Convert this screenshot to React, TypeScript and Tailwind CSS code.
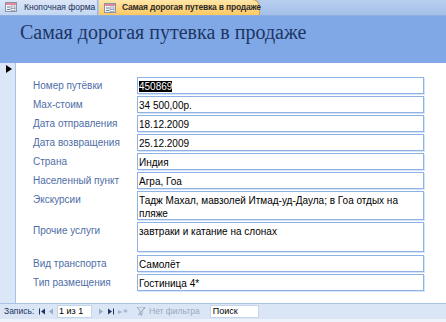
import React from "react";

const rows: { label: string; value: React.ReactNode; h: number; mt: number; selected?: boolean }[] = [
  { label: "Номер путёвки", value: "450869", h: 17, mt: 0, selected: true },
  { label: "Max-стоим", value: "34 500,00р.", h: 17, mt: 2 },
  { label: "Дата отправления", value: "18.12.2009", h: 17, mt: 2 },
  { label: "Дата возвращения", value: "25.12.2009", h: 17, mt: 2 },
  { label: "Страна", value: "Индия", h: 17, mt: 2 },
  { label: "Населенный пункт", value: "Агра, Гоа", h: 17, mt: 2 },
  {
    label: "Экскурсии",
    value: (
      <>
        Тадж Махал, мавзолей Итмад-уд-Даула; в Гоа отдых на
        <br />
        пляже
      </>
    ),
    h: 29,
    mt: 2,
  },
  { label: "Прочие услуги", value: "завтраки и катание на слонах", h: 30, mt: 2 },
  { label: "Вид транспорта", value: "Самолёт", h: 17, mt: 3 },
  { label: "Тип размещения", value: "Гостиница 4*", h: 17, mt: 2 },
];

function FormIcon() {
  return (
    <svg width="12" height="10" viewBox="0 0 12 10" className="shrink-0">
      <rect x="0.5" y="0.5" width="11" height="9" fill="#f4f6fb" stroke="#8a94a8" />
      <rect x="1" y="1" width="10" height="2" fill="#e4899a" />
      <rect x="2" y="4.5" width="3" height="1" fill="#6d7c9c" />
      <rect x="6" y="4" width="4" height="2" fill="#ffffff" stroke="#6d7c9c" strokeWidth="0.6" />
      <rect x="2" y="7" width="3" height="1" fill="#6d7c9c" />
      <rect x="6" y="6.5" width="4" height="2" fill="#ffffff" stroke="#6d7c9c" strokeWidth="0.6" />
    </svg>
  );
}

function NavArrow({ dir, bar, color }: { dir: "l" | "r"; bar?: boolean; color: string }) {
  return (
    <svg width="7" height="7" viewBox="0 0 7 7">
      {dir === "l" ? (
        <>
          {bar && <rect x="0" y="0.5" width="1" height="6" fill={color} />}
          <polygon points={bar ? "6,0.5 2,3.5 6,6.5" : "5,0.5 1,3.5 5,6.5"} fill={color} />
        </>
      ) : (
        <>
          <polygon points={bar ? "1,0.5 5,3.5 1,6.5" : "2,0.5 6,3.5 2,6.5"} fill={color} />
          {bar && <rect x="6" y="0.5" width="1" height="6" fill={color} />}
        </>
      )}
    </svg>
  );
}

export default function App() {
  return (
    <div className="w-[446px] h-[322px] overflow-hidden flex flex-col bg-white font-['Liberation_Sans',sans-serif]">
      {/* tab bar */}
      <div className="h-[16px] flex items-end bg-gradient-to-b from-[#b9cff0] to-[#a4bfe8] border-b border-[#8eafe0] shrink-0">
        <div className="h-[16px] w-[98px] shrink-0 flex items-center gap-[7px] pl-[5px] bg-gradient-to-b from-[#dde8f8] to-[#c3d6f2] border-r border-[#9cb7e2] rounded-tr-[3px]">
          <FormIcon />
          <span className="text-[8.5px] leading-none whitespace-nowrap text-[#1d2f55]">Кнопочная форма</span>
        </div>
        <div className="h-[16px] w-[161px] shrink-0 ml-[1px] flex items-center gap-[6px] pl-[5px] bg-gradient-to-b from-[#ffe6a8] to-[#fcc860] border-r border-t border-[#d4a450] rounded-tr-[8px]">
          <FormIcon />
          <span className="text-[8.5px] leading-none whitespace-nowrap font-bold tracking-[-0.2px] text-[#2a2a2a]">Самая дорогая путевка в продаже</span>
        </div>
      </div>

      {/* header */}
      <div className="h-[47px] shrink-0 bg-[#80a8e6] pl-[20px] pt-[4px]">
        <div className="text-[20px] leading-[24px] whitespace-nowrap text-[#1d3563] font-['Liberation_Serif',serif]">
          Самая дорогая путевка в продаже
        </div>
      </div>

      {/* body */}
      <div className="flex-1 flex min-h-0">
        <div className="w-[16px] shrink-0 bg-[#dbe6f6] border-r border-[#a9c2e6] pt-[2px] pl-[6px]">
          <svg width="6" height="8" viewBox="0 0 6 8">
            <polygon points="0,0 6,4 0,8" fill="#000" />
          </svg>
        </div>
        <div className="flex-1 pt-[14px] pl-[17px] flex flex-col">
          {rows.map((r) => (
            <div key={r.label} className="flex" style={{ marginTop: r.mt, height: r.h }}>
              <div className="w-[104px] shrink-0 pt-[3px] text-[10px] leading-[12px] whitespace-nowrap text-[#4f6ea6]">{r.label}</div>
              <div className="w-[287px] h-full border border-[#8fb2e6] shadow-[1px_1px_0_#d6e4f7] pl-[1px] pt-[2px] text-[10px] leading-[13px] text-black">
                {r.selected ? <span className="bg-black text-white">{r.value}</span> : r.value}
              </div>
            </div>
          ))}
        </div>
      </div>

      {/* nav bar */}
      <div className="h-[16px] shrink-0 flex items-center bg-[#dae5f5] border-t border-[#a9c2e6] text-[8.5px] leading-none whitespace-nowrap">
        <span className="pl-[4px] text-[#1d3563] w-[39px] shrink-0">Запись:</span>
        <span className="w-[9px] flex shrink-0"><NavArrow dir="l" bar color="#1d3563" /></span>
        <span className="w-[9px] flex shrink-0"><NavArrow dir="l" color="#9aaac4" /></span>
        <div className="w-[35px] h-[13px] shrink-0 bg-white border border-[#c5d5ee] flex items-center pl-[1px] text-[9px] text-black">1 из 1</div>
        <span className="ml-[5px] w-[10px] flex shrink-0"><NavArrow dir="r" color="#9aaac4" /></span>
        <span className="w-[11px] flex shrink-0"><NavArrow dir="r" bar color="#1d3563" /></span>
        <span className="w-[17px] shrink-0 text-[#a3b2cc] text-[8px]">▸✶</span>
        <div className="flex items-center gap-[3px] text-[#9aa8c0] ml-[2px] shrink-0">
          <svg width="9" height="9" viewBox="0 0 9 9">
            <polygon points="0,0 8,0 5,4 5,8 3,8 3,4" fill="none" stroke="#9aa8c0" strokeWidth="1" />
            <line x1="1" y1="8" x2="8" y2="1" stroke="#9aa8c0" strokeWidth="1" />
          </svg>
          <span>Нет фильтра</span>
        </div>
        <div className="ml-[10px] w-[49px] h-[13px] shrink-0 bg-white border border-[#c5d5ee] flex items-center pl-[2px] text-[9px] text-black">Поиск</div>
      </div>
      <div className="h-[3px] shrink-0 bg-[#eef3fb]" />
    </div>
  );
}
